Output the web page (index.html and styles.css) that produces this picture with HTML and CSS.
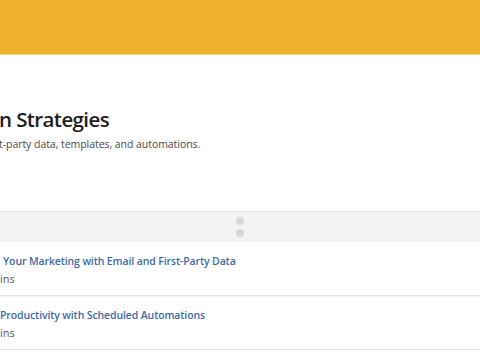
FILE: index.html
```html
<!DOCTYPE html>
<html lang="en">
<head>
  <meta charset="UTF-8" />
  <title>Strategies</title>
  <link rel="stylesheet" href="styles.css">
</head>
<body>
  <header class="banner"></header>

  <section class="intro">
    <h1>n Strategies</h1>
    <p class="lead">t-party data, templates, and automations.</p>
  </section>

  <div class="handle-bar">
    <span class="dot"></span>
    <span class="dot"></span>
  </div>

  <ul class="steps">
    <li class="step">
      <a class="step-title" href="#">Your Marketing with Email and First-Party Data</a>
      <span class="step-meta">ins</span>
    </li>
    <li class="step">
      <a class="step-title" href="#">Productivity with Scheduled Automations</a>
      <span class="step-meta">ins</span>
    </li>
  </ul>
</body>
</html>
```

FILE: styles.css
```css
body {
  font-family: 'Open Sans', 'Noto Sans', sans-serif;
  background: #ffffff;
  margin: 0;
  overflow: hidden;
}

.banner {
  height: 54px;
  background: #eeb230;
  border-bottom: 1px solid #f3d58c;
}

.intro {
  padding: 50px 0 0 0;
  height: 106px;
}

h1 {
  margin: 0 0 0 -1px;
  font-size: 20.5px;
  font-weight: 600;
  letter-spacing: -0.6px;
  color: #1e1e1e;
  line-height: 28px;
}

.lead {
  margin: 3px 0 0 -1px;
  font-size: 10.5px;
  letter-spacing: -0.05px;
  color: #4a4a4a;
  line-height: 16px;
}

.handle-bar {
  height: 30px;
  background: #f3f3f3;
  border-top: 1px solid #e6e6e6;
  display: flex;
  flex-direction: column;
  align-items: center;
  justify-content: center;
  gap: 4px;
}

.dot {
  width: 8px;
  height: 8px;
  border-radius: 50%;
  background: #d9d9d9;
}

.steps {
  list-style: none;
  margin: 0;
  padding: 0;
}

.step {
  height: 54px;
  border-bottom: 1px solid #e3e3e3;
  box-shadow: 0 1px 0 #f4f4f4;
  display: flex;
  flex-direction: column;
  padding: 10px 0 0 0;
  box-sizing: border-box;
}

.step-title {
  font-size: 10.5px;
  font-weight: 600;
  letter-spacing: -0.12px;
  color: #4169a6;
  text-decoration: none;
  line-height: 18px;
}

.step:first-child .step-title {
  padding-left: 3px;
}

.step-meta {
  font-size: 11px;
  color: #5a5a5a;
  line-height: 18px;
}
```
